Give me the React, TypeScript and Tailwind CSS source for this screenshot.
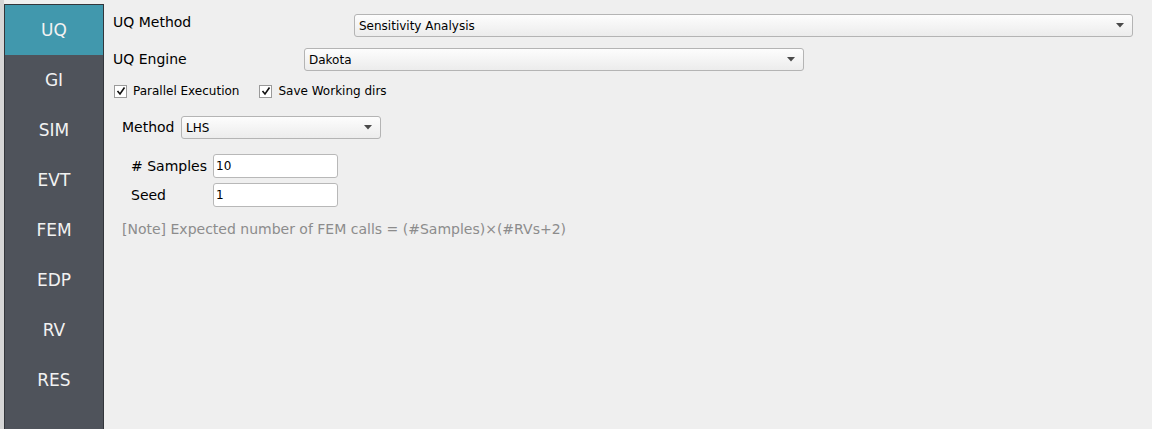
import React from "react";

const font = { fontFamily: '"DejaVu Sans", sans-serif' };

function Arrow() {
  return (
    <svg width="8" height="5" viewBox="0 0 8 5" className="shrink-0">
      <path d="M0 0 L8 0 L4 4.5 Z" fill="#4a4a4a" />
    </svg>
  );
}

function Combo({ text, className }: { text: string; className: string }) {
  return (
    <div
      className={`flex items-center justify-between rounded-[3px] border border-[#b4b4b4] bg-gradient-to-b from-[#fdfdfd] to-[#ececec] pl-[4px] pr-[8px] text-[12px] text-black ${className}`}
    >
      <span>{text}</span>
      <Arrow />
    </div>
  );
}

function Check({ label }: { label: string }) {
  return (
    <div className="flex items-center gap-[6px] text-[12px] text-black">
      <div className="flex h-[13px] w-[13px] items-center justify-center border border-[#9a9a9a] bg-white">
        <svg width="10" height="10" viewBox="0 0 10 10">
          <path d="M1.5 5 L4 8 L8.5 1.5" stroke="#111" strokeWidth="1.6" fill="none" />
        </svg>
      </div>
      <span>{label}</span>
    </div>
  );
}

function Input({ value }: { value: string }) {
  return (
    <div className="flex h-[24px] w-[125px] items-center rounded-[3px] border border-[#b8b8b8] bg-white pl-[2px] text-[12px] text-black">
      {value}
    </div>
  );
}

export default function App() {
  const items = ["UQ", "GI", "SIM", "EVT", "FEM", "EDP", "RV", "RES"];
  return (
    <div className="flex h-[429px] w-[1152px] overflow-hidden bg-[#efefef]" style={font}>
      <div className="h-full w-[4px] bg-[#d6d6d6]" />
      <div className="mt-[4px] flex h-[425px] w-[100px] flex-col border-l border-t border-r border-[#33363b] bg-[#4f535b]">
        {items.map((it, i) => (
          <div
            key={it}
            className={`flex h-[50px] shrink-0 items-center justify-center pt-[2px] text-[17px] text-[#f2f2f2] ${
              i === 0 ? "bg-[#4198ad]" : ""
            }`}
          >
            {it}
          </div>
        ))}
      </div>
      <div className="flex flex-1 flex-col pl-[9px] pt-[14px]">
        <div className="flex h-[23px] items-center">
          <span className="mt-[-6px] w-[241px] text-[14px] text-black">UQ Method</span>
          <Combo text="Sensitivity Analysis" className="h-[23px] w-[779px]" />
        </div>
        <div className="mt-[11px] flex h-[23px] items-center">
          <span className="w-[191px] text-[14px] text-black">UQ Engine</span>
          <Combo text="Dakota" className="h-[23px] w-[500px]" />
        </div>
        <div className="mt-[11px] flex items-center gap-[20px] pl-[1px]">
          <Check label="Parallel Execution" />
          <Check label="Save Working dirs" />
        </div>
        <div className="mt-[16px] flex h-[23px] items-center pl-[9px]">
          <span className="w-[59px] text-[14px] text-black">Method</span>
          <Combo text="LHS" className="h-[23px] w-[200px]" />
        </div>
        <div className="mt-[15px] flex items-center pl-[18px]">
          <span className="w-[82px] text-[14px] text-black"># Samples</span>
          <Input value="10" />
        </div>
        <div className="mt-[5px] flex items-center pl-[18px]">
          <span className="w-[82px] text-[14px] text-black">Seed</span>
          <Input value="1" />
        </div>
        <div className="mt-[12px] pl-[9px] text-[14px] text-[#8c8c8c]">
          [Note] Expected number of FEM calls = (#Samples)×(#RVs+2)
        </div>
      </div>
    </div>
  );
}
